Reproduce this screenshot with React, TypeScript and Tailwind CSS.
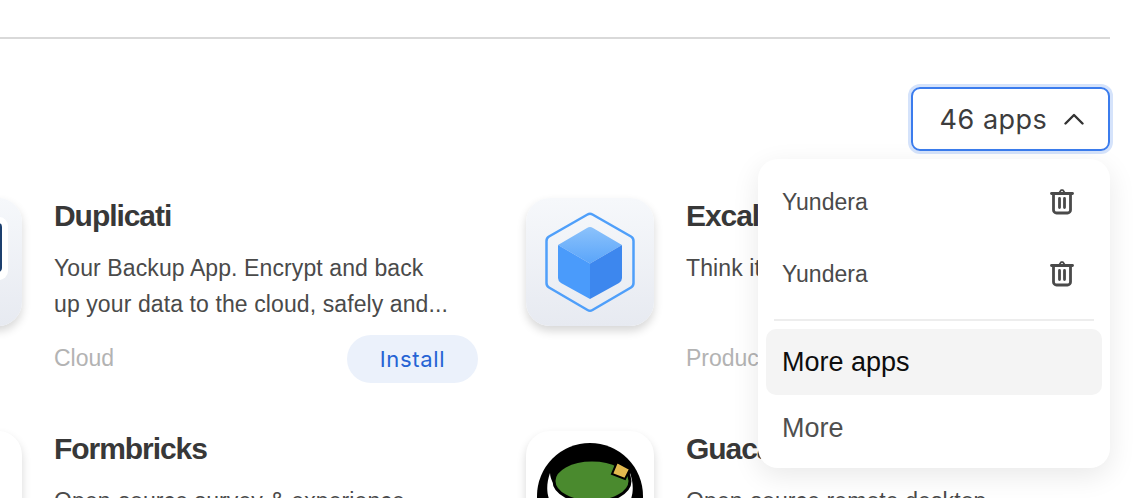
const Trash = () => (
  <svg width="24" height="26" viewBox="0 0 24 26" fill="none" stroke="#4a4a4a" strokeWidth="2.800" strokeLinecap="round" strokeLinejoin="round">
    <path d="M1.500 4.500h21" />
    <path d="M9.500 3.500 11 1.200h2l1.500 2.300" strokeWidth="1.800" />
    <path d="M3.500 5v16a3 3 0 0 0 3 3h11a3 3 0 0 0 3-3V5" />
    <path d="M9.500 9.500v9M14.500 9.500v9" />
  </svg>
);

const BoxIcon = () => (
  <svg width="128" height="128" viewBox="0 0 128 128" fill="none">
    <defs>
      <linearGradient id="boxtop" x1="0" y1="0" x2="0" y2="1">
        <stop offset="0" stopColor="#8cc2fb" />
        <stop offset="1" stopColor="#5aa5fa" />
      </linearGradient>
    </defs>
    <path d="M61.500 16.500 Q64 15 66.500 16.500 L105 38.500 Q107.500 40 107.500 43 V85 Q107.500 88 105 89.500 L66.500 112 Q64 113.500 61.500 112 L23 89.500 Q20.500 88 20.500 85 V43 Q20.500 40 23 38.500 Z" stroke="#4f9ffa" strokeWidth="2.500" />
    <path d="M61 30 Q64 28 67 30 L96 47 L64 65.500 L32 47 Z" fill="url(#boxtop)" />
    <path d="M32 47 L64 65.500 V101 L35 85 Q32 83 32 80 Z" fill="#4a9bfb" />
    <path d="M96 47 L64 65.500 V101 L93 85 Q96 83 96 80 Z" fill="#3d87ee" />
  </svg>
);

const DupIcon = () => (
  <svg width="128" height="128" viewBox="0 0 128 128" fill="none">
    <rect x="40" y="19" width="74" height="63" rx="9" fill="#ffffff" />
    <rect x="50" y="25" width="58" height="49" rx="4" fill="#1c3f6e" />
  </svg>
);

const GuacIcon = () => (
  <svg width="128" height="128" viewBox="0 0 128 128" fill="none">
    <circle cx="64" cy="65" r="53" fill="#000000" />
    <path d="M24 42 C14 70 32 92 64 92 C96 92 114 70 104 42 C102 76 26 76 24 42 Z" fill="#ffffff" />
    <ellipse cx="66" cy="50" rx="38" ry="21" fill="#4a8a2e" stroke="#000000" strokeWidth="3" />
    <path d="M91 31 L104 38 L99 48 L86 43 Z" fill="#e2b94f" stroke="#000000" strokeWidth="2" />
  </svg>
);

type CardProps = {
  title: string;
  desc: string[];
  category?: string;
  icon?: React.ReactNode;
  tone: string;
  install?: boolean;
};

const Card = ({ title, desc, category, icon, tone, install }: CardProps) => (
  <div className="flex gap-8">
    <div className={`w-[128px] h-[128px] shrink-0 rounded-[24px] overflow-hidden shadow-[0_5px_10px_rgba(0,0,0,0.16)] ${tone}`}>
      {icon}
    </div>
    <div className="w-[424px] shrink-0 font-['Liberation_Sans',sans-serif]">
      <div className="text-[30px] leading-[36px] font-bold text-[#383838] tracking-[-1.05px] whitespace-nowrap">{title}</div>
      <div className="mt-[16px] h-[72px] text-[23px] leading-[36px] text-[#4a4a4a] tracking-[0.1px] whitespace-nowrap">
        {desc.map((line) => (
          <div key={line}>{line}</div>
        ))}
      </div>
      <div className="mt-[13px] flex items-center justify-between h-[48px]">
        <span className="pb-[2px] text-[23px] text-[#b3b3b3]">{category}</span>
        {install && (
          <button className="w-[131px] h-[48px] rounded-full bg-[#ebf1fb] text-[#2563d4] text-[22px] tracking-[0.7px] font-['Inter',sans-serif]">
            Install
          </button>
        )}
      </div>
    </div>
  </div>
);

export default function App() {
  return (
    <div className="relative w-[1138px] h-[498px] overflow-hidden bg-white font-['Inter',sans-serif]">
      <div className="pt-[37px] pr-[28px]">
        <div className="h-[2px] bg-[#d9d9d9]" />
      </div>

      <div className="flex justify-end pr-[28px] mt-[48px]">
        <button className="w-[199px] h-[64px] flex items-center justify-center gap-[17px] pl-[3px] rounded-[9px] border-2 border-[#3b7ced] shadow-[0_0_0_3px_#d5e3fb] text-[27px] tracking-[0.5px] text-[#3d3d3d]">
          <span className="translate-y-[1px]">46 apps</span>
          <svg width="20" height="14" viewBox="0 0 20 14" fill="none" stroke="#333333" strokeWidth="2.400" strokeLinecap="round" strokeLinejoin="round">
            <path d="M1.500 11.500 10 3l8.500 8.500" />
          </svg>
        </button>
      </div>

      <div className="ml-[-106px] mt-[47px] grid grid-cols-[584px_584px] gap-x-[48px] gap-y-[48px]">
        <Card
          title="Duplicati"
          desc={["Your Backup App. Encrypt and back", "up your data to the cloud, safely and..."]}
          category="Cloud"
          tone="bg-gradient-to-b from-[#f6f8fb] to-[#e7eaf1]"
          icon={<DupIcon />}
          install
        />
        <Card
          title="Excalidraw"
          desc={["Think it"]}
          category="Productivity"
          tone="bg-gradient-to-b from-[#f6f8fb] to-[#e7eaf1]"
          icon={<BoxIcon />}
        />
        <Card
          title="Formbricks"
          desc={["Open-source survey & experience"]}
          tone="bg-white"
        />
        <Card
          title="Guacamole"
          desc={["Open-source remote desktop"]}
          tone="bg-white"
          icon={<GuacIcon />}
        />
      </div>

      <div className="absolute left-[758px] top-[159px] w-[352px] h-[309px] rounded-[20px] bg-white shadow-[0_8px_28px_rgba(0,0,0,0.09)] text-[23px] px-2 pt-[7px] font-['Liberation_Sans',sans-serif]">
        {[0, 1].map((i) => (
          <div key={i} className="h-[72px] flex items-center justify-between pl-4 pr-[28px] text-[#4a4a4a]">
            <span>Yundera</span>
            <Trash />
          </div>
        ))}
        <div className="mx-2 mt-[9px] h-[2px] bg-[#ededed]" />
        <div className="mt-[8px] h-[66px] flex items-center pl-4 rounded-[10px] bg-[#f4f4f4] text-[27px] text-[#0d0d0d]">
          More apps
        </div>
        <div className="h-[66px] flex items-center pl-4 text-[27px] text-[#4f4f4f]">
          More
        </div>
      </div>
    </div>
  );
}
